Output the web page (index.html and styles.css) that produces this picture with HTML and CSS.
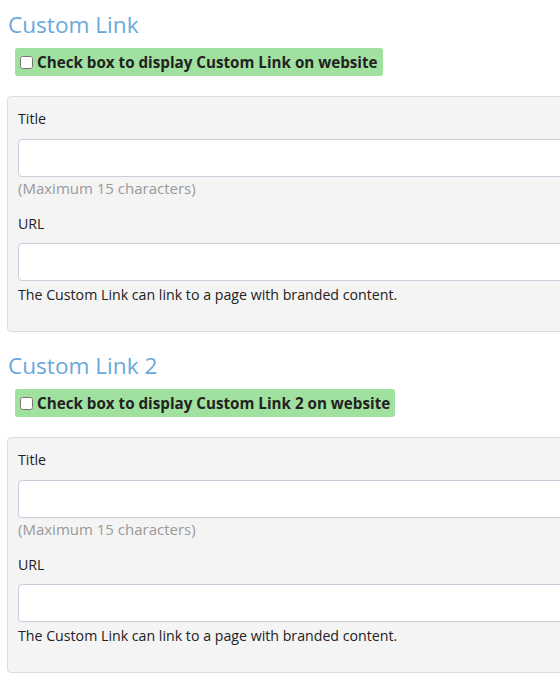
FILE: index.html
```html
<!DOCTYPE html>
<html>
<head>
<meta charset="utf-8">
<link rel="stylesheet" href="styles.css">
</head>
<body>
<div class="page">
  <section class="section">
    <h3 class="section-title">Custom Link</h3>
    <label class="notice"><input type="checkbox" class="notice-check"> Check box to display Custom Link on website</label>
    <div class="panel">
      <div class="field">
        <label class="field-label">Title</label>
        <input type="text" class="field-input">
        <div class="hint">(Maximum 15 characters)</div>
      </div>
      <div class="field">
        <label class="field-label">URL</label>
        <input type="text" class="field-input">
        <div class="help">The Custom Link can link to a page with branded content.</div>
      </div>
    </div>
  </section>
  <section class="section">
    <h3 class="section-title">Custom Link 2</h3>
    <label class="notice"><input type="checkbox" class="notice-check"> Check box to display Custom Link 2 on website</label>
    <div class="panel">
      <div class="field">
        <label class="field-label">Title</label>
        <input type="text" class="field-input">
        <div class="hint">(Maximum 15 characters)</div>
      </div>
      <div class="field">
        <label class="field-label">URL</label>
        <input type="text" class="field-input">
        <div class="help">The Custom Link can link to a page with branded content.</div>
      </div>
    </div>
  </section>
</div>
</body>
</html>
```
FILE: styles.css
```css
html, body {
  margin: 0;
  padding: 0;
  background: #fff;
  overflow: hidden;
}
body {
  font-family: "Open Sans", "Noto Sans", sans-serif;
  font-size: 14.2px;
  color: #222;
}
.page {
  padding: 8px 0 0 7px;
  width: 640px;
}
.section {
  margin-bottom: 17px;
}
.section-title {
  margin: 0 0 0 1px;
  font-size: 22.6px;
  line-height: 34px;
  font-weight: 400;
  color: #6aa8dc;
}
.notice {
  display: inline-flex;
  align-items: center;
  margin: 6px 0 0 8px;
  padding: 0 5px 0 5px;
  height: 28px;
  box-sizing: border-box;
  background: #a1e1a0;
  border-radius: 3px;
  font-weight: 700;
  font-size: 15.2px;
  color: #222;
}
.notice-check {
  margin: 0 4px 0 0;
  width: 13px;
  height: 13px;
}
.panel {
  margin-top: 20px;
  background: #f4f4f4;
  border: 1px solid #ddd;
  border-radius: 4px;
  padding: 11px 10px 26px;
}
.field + .field {
  margin-top: 14px;
}
.field-label {
  display: block;
  line-height: 21px;
  margin-bottom: 10px;
}
.field + .field .field-label {
  margin-bottom: 9px;
}
.field-input {
  display: block;
  box-sizing: border-box;
  width: 100%;
  height: 38px;
  margin: 0;
  border: 1px solid #ccd;
  border-radius: 4px;
  background: #fff;
}
.hint {
  line-height: 21px;
  font-size: 15px;
  color: #999;
  margin-top: 1px;
}
.help {
  line-height: 21px;
  margin-top: 3px;
}
```
